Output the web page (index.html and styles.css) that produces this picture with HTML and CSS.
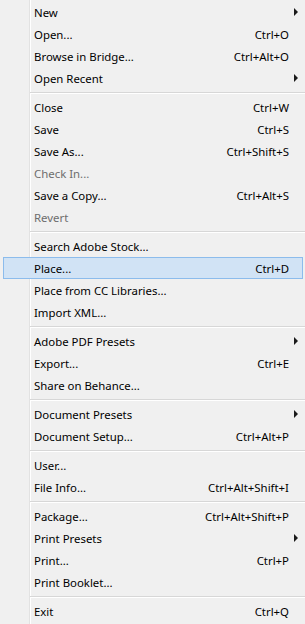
FILE: index.html
```html
<!DOCTYPE html>
<html lang="en">
<head>
    <meta charset="UTF-8">
    <title>File</title>
    <link rel="stylesheet" href="styles.css">
</head>
<body>
<ul class="menu">
    <li class="item"><span class="label">New</span><span class="key"></span><span class="sub"></span></li>
    <li class="item"><span class="label">Open...</span><span class="key">Ctrl+O</span></li>
    <li class="item"><span class="label">Browse in Bridge...</span><span class="key">Ctrl+Alt+O</span></li>
    <li class="item"><span class="label">Open Recent</span><span class="key"></span><span class="sub"></span></li>
    <li class="sep"></li>
    <li class="item"><span class="label">Close</span><span class="key">Ctrl+W</span></li>
    <li class="item"><span class="label">Save</span><span class="key">Ctrl+S</span></li>
    <li class="item"><span class="label">Save As...</span><span class="key">Ctrl+Shift+S</span></li>
    <li class="item off"><span class="label">Check In...</span></li>
    <li class="item"><span class="label">Save a Copy...</span><span class="key">Ctrl+Alt+S</span></li>
    <li class="item off"><span class="label">Revert</span></li>
    <li class="sep"></li>
    <li class="item"><span class="label">Search Adobe Stock...</span></li>
    <li class="item hot"><span class="label">Place...</span><span class="key">Ctrl+D</span></li>
    <li class="item"><span class="label">Place from CC Libraries...</span></li>
    <li class="item"><span class="label">Import XML...</span></li>
    <li class="sep"></li>
    <li class="item"><span class="label">Adobe PDF Presets</span><span class="key"></span><span class="sub"></span></li>
    <li class="item"><span class="label">Export...</span><span class="key">Ctrl+E</span></li>
    <li class="item"><span class="label">Share on Behance...</span></li>
    <li class="sep"></li>
    <li class="item"><span class="label">Document Presets</span><span class="key"></span><span class="sub"></span></li>
    <li class="item"><span class="label">Document Setup...</span><span class="key">Ctrl+Alt+P</span></li>
    <li class="sep"></li>
    <li class="item"><span class="label">User...</span></li>
    <li class="item"><span class="label">File Info...</span><span class="key">Ctrl+Alt+Shift+I</span></li>
    <li class="sep"></li>
    <li class="item"><span class="label">Package...</span><span class="key">Ctrl+Alt+Shift+P</span></li>
    <li class="item"><span class="label">Print Presets</span><span class="key"></span><span class="sub"></span></li>
    <li class="item"><span class="label">Print...</span><span class="key">Ctrl+P</span></li>
    <li class="item"><span class="label">Print Booklet...</span></li>
    <li class="sep"></li>
    <li class="item"><span class="label">Exit</span><span class="key">Ctrl+Q</span></li>
</ul>
</body>
</html>
```
FILE: styles.css
```css
html, body {
    margin: 0;
    padding: 0;
    background: #f0f0f0;
}

.menu {
    list-style: none;
    margin: 0;
    padding: 1px 0 0;
    width: 305px;
    height: 624px;
    box-sizing: border-box;
    overflow: hidden;
    font-family: "Noto Sans", "Open Sans", sans-serif;
    font-size: 11.4px;
    color: #000;
    /* icon gutter line */
    background: linear-gradient(to right, transparent 29px, #e2e2e2 29px, #e2e2e2 30px, #fff 30px, #fff 31px, transparent 31px), #f0f0f0;
}

.item {
    display: flex;
    align-items: center;
    height: 22px;
    box-sizing: border-box;
    margin: 0 2px 0 3px;
    padding: 0 0 0 30px;
    border: 1px solid transparent;
    white-space: nowrap;
}

.item .label {
    flex: 1;
}

.item .key {
    text-align: right;
}

.item .sub {
    width: 0;
    height: 0;
    margin: 0 4px 0 5px;
    border-left: 4px solid #1a1a1a;
    border-top: 4px solid transparent;
    border-bottom: 4px solid transparent;
}

.item:not(:has(.sub))::after {
    content: '';
    width: 13px;
}

.item.off {
    color: #6d6d6d;
}

.item.hot {
    background: #d1e3f5;
    border-color: #8cbcec;
}

.sep {
    height: 7px;
    margin-left: 30px;
    background: linear-gradient(to bottom, transparent 3px, #d7d7d7 3px, #d7d7d7 4px, #fff 4px, #fff 5px, transparent 5px);
}
```
